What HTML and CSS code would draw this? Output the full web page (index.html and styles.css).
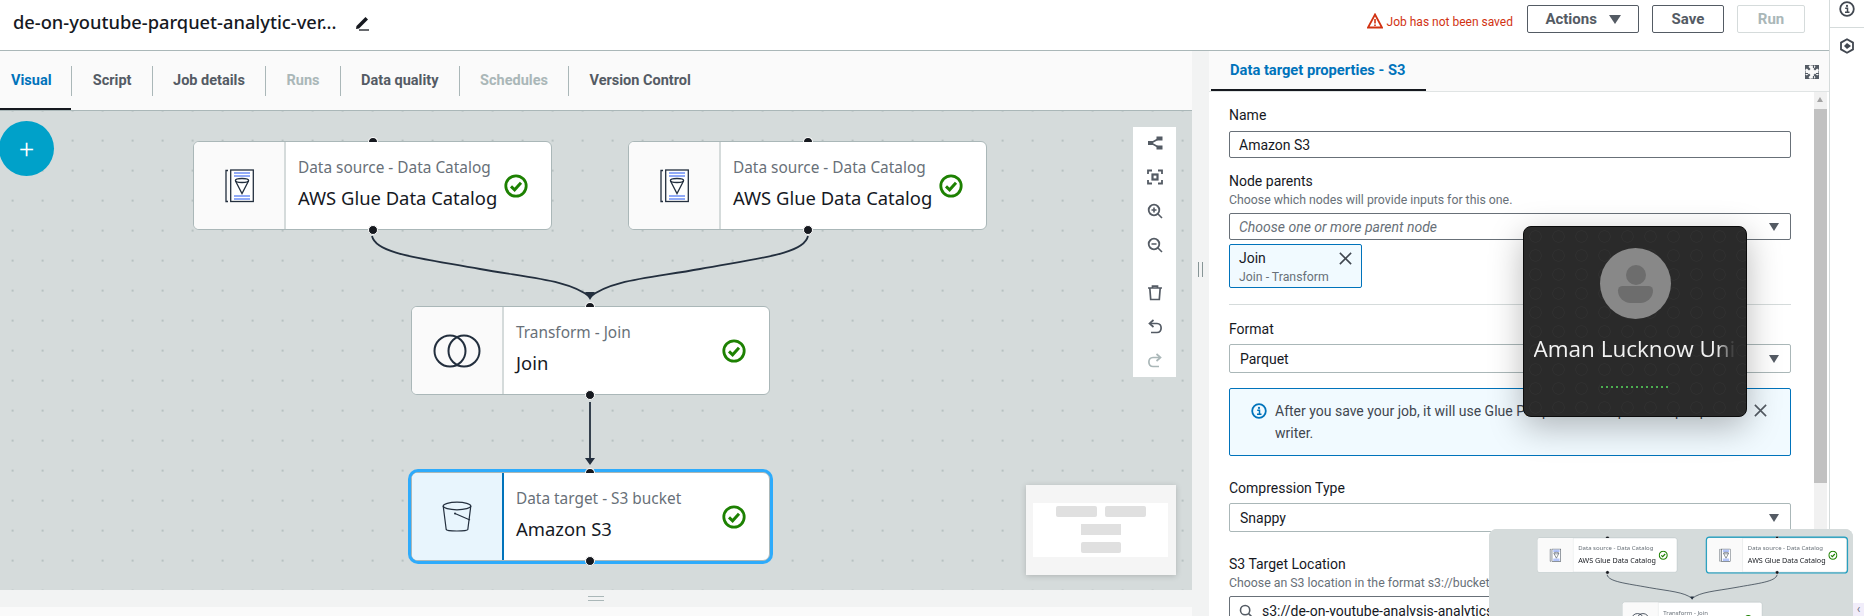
FILE: index.html
```html
<!DOCTYPE html>
<html lang="en">

<head>
  <meta charset="UTF-8">
  <meta name="viewport" content="width=device-width, initial-scale=1.0">
  <title>Glue Studio - Visual ETL</title>
  <link rel="stylesheet" href="styles.css">
</head>

<body>
  <!-- Shared icons -->
  <svg class="icon-defs" aria-hidden="true">
    <symbol id="i-check" viewBox="0 0 24 24">
      <circle cx="12" cy="12" r="10.2" fill="none" stroke="#1d8102" stroke-width="2.8" />
      <path d="M7 12.400l3.600 3.400L17 8.800" fill="none" stroke="#1d8102" stroke-width="3" />
    </symbol>
    <symbol id="i-catalog" viewBox="0 0 30 34">
      <path d="M4 1.500H2V32.500H4" fill="none" stroke="#232f3e" stroke-width="1.300" />
      <rect x="6.700" y="1" width="22.600" height="31.500" fill="#fff" stroke="#232f3e" stroke-width="1.300" />
      <path d="M10 4h16M10 7h16M10 27h16M10 30h16" stroke="#6d8ff5" stroke-width="1.700" />
      <ellipse cx="18" cy="11.500" rx="6.600" ry="2" fill="none" stroke="#232f3e" stroke-width="1.300" />
      <path d="M11.500 12l6.500 12.500L24.500 12" fill="none" stroke="#232f3e" stroke-width="1.300" />
    </symbol>
    <symbol id="i-join" viewBox="0 0 48 34">
      <circle cx="17" cy="17" r="15.500" fill="none" stroke="#232f3e" stroke-width="2" />
      <circle cx="31" cy="17" r="15.500" fill="none" stroke="#232f3e" stroke-width="2" />
    </symbol>
    <symbol id="i-bucket" viewBox="0 0 30 32">
      <ellipse cx="15" cy="5" rx="13.800" ry="3.800" fill="none" stroke="#232f3e" stroke-width="1.200" />
      <path d="M1.200 5l3 23.500c.5 2 20.800 2 21.600 0l3-23.500" fill="none" stroke="#232f3e" stroke-width="1.200" />
      <path d="M13 12.500l15 6.500" stroke="#232f3e" stroke-width="1.200" />
      <circle cx="13" cy="12.500" r="1" fill="#232f3e" />
    </symbol>
    <symbol id="i-x" viewBox="0 0 16 16">
      <path d="M2 2l12 12M14 2L2 14" fill="none" stroke="currentColor" stroke-width="1.700" />
    </symbol>
    <symbol id="i-info" viewBox="0 0 16 16">
      <circle cx="8" cy="8" r="6.800" fill="none" stroke="currentColor" stroke-width="1.800" />
      <circle cx="8" cy="4.900" r="1.100" fill="currentColor" />
      <path d="M6.200 7.200H8.500V11M6 11.300h4.500" fill="none" stroke="currentColor" stroke-width="1.500" />
    </symbol>
    <g id="graph-edges">
      <path d="M372 126C376 144 420 148 480 159C530 168 570 170 590 187" />
      <path d="M808 126C804 144 760 148 700 159C650 168 610 170 590 187" />
      <path d="M590 292V352" />
      <polygon class="edge-head" points="585,182 595,182 590,190" />
      <polygon class="edge-head" points="585,348 595,348 590,355" />
    </g>
  </svg>

  <div class="app">
    <div class="workspace">
      <header class="topbar">
        <h1 class="job-title">de-on-youtube-parquet-analytic-ver...</h1>
        <svg class="pencil" viewBox="0 0 16 16">
          <path d="M2.500 11L11.500 2L14 4.500L5 13.500L2 14Z" fill="#16191f" />
          <path d="M5 15h10" stroke="#16191f" stroke-width="1.300" />
        </svg>
        <div class="save-status">
          <svg class="warn-icon" viewBox="0 0 16 16">
            <path d="M8 1.500L15 14.500H1Z" fill="none" stroke="#d13212" stroke-width="1.800" />
            <path d="M8 6v4.500M8 11.500v1.500" stroke="#d13212" stroke-width="1.600" />
          </svg>
          <span>Job has not been saved</span>
        </div>
        <button class="btn btn-actions">Actions <span class="caret"></span></button>
        <button class="btn btn-save">Save</button>
        <button class="btn btn-run" disabled>Run</button>
      </header>

      <div class="panes">
        <section class="editor">
          <nav class="tabs">
            <span class="tab active">Visual</span>
            <span class="tab">Script</span>
            <span class="tab">Job details</span>
            <span class="tab disabled">Runs</span>
            <span class="tab">Data quality</span>
            <span class="tab disabled">Schedules</span>
            <span class="tab last">Version Control</span>
          </nav>

          <div class="canvas">
            <button class="add-node">+</button>

            <svg class="edges"><use href="#graph-edges" /></svg>

            <div class="node node-a">
              <span class="port port-in"></span>
              <div class="node-icon"><svg class="ic-catalog"><use href="#i-catalog" /></svg></div>
              <div class="node-body">
                <span class="node-type">Data source - Data Catalog</span>
                <span class="node-name">AWS Glue Data Catalog</span>
              </div>
              <svg class="node-check"><use href="#i-check" /></svg>
              <span class="port port-out"></span>
            </div>

            <div class="node node-b">
              <span class="port port-in"></span>
              <div class="node-icon"><svg class="ic-catalog"><use href="#i-catalog" /></svg></div>
              <div class="node-body">
                <span class="node-type">Data source - Data Catalog</span>
                <span class="node-name">AWS Glue Data Catalog</span>
              </div>
              <svg class="node-check"><use href="#i-check" /></svg>
              <span class="port port-out"></span>
            </div>

            <div class="node node-c">
              <span class="port port-in"></span>
              <div class="node-icon"><svg class="ic-join"><use href="#i-join" /></svg></div>
              <div class="node-body">
                <span class="node-type">Transform - Join</span>
                <span class="node-name">Join</span>
              </div>
              <svg class="node-check"><use href="#i-check" /></svg>
              <span class="port port-out"></span>
            </div>

            <div class="node node-d selected">
              <span class="port port-in"></span>
              <div class="node-icon"><svg class="ic-bucket"><use href="#i-bucket" /></svg></div>
              <div class="node-body">
                <span class="node-type">Data target - S3 bucket</span>
                <span class="node-name">Amazon S3</span>
              </div>
              <svg class="node-check"><use href="#i-check" /></svg>
              <span class="port port-out"></span>
            </div>

            <!-- Canvas tools -->
            <div class="toolbar">
              <svg class="tool" viewBox="0 0 16 16">
                <path d="M4 8L12 3.500M4 8L12 12.500" stroke="#545b64" stroke-width="1.500" />
                <rect x="1" y="6" width="5" height="4" fill="#545b64" />
                <rect x="9.500" y="1.500" width="6" height="4" fill="#545b64" />
                <rect x="9.500" y="10.500" width="6" height="4" fill="#545b64" />
              </svg>
              <svg class="tool" viewBox="0 0 16 16">
                <path d="M1 5V1.500H5M11 1.500H15V5M15 11V14.500H11M5 14.500H1V11" fill="none" stroke="#545b64" stroke-width="1.800" />
                <rect x="5.500" y="5.500" width="5" height="5" fill="none" stroke="#545b64" stroke-width="2.200" />
              </svg>
              <svg class="tool" viewBox="0 0 16 16">
                <circle cx="7" cy="7" r="5.300" fill="none" stroke="#545b64" stroke-width="1.800" />
                <path d="M11 11l4 4M4.500 7h5M7 4.500v5" stroke="#545b64" stroke-width="1.600" />
              </svg>
              <svg class="tool" viewBox="0 0 16 16">
                <circle cx="7" cy="7" r="5.300" fill="none" stroke="#545b64" stroke-width="1.800" />
                <path d="M11 11l4 4M4.500 7h5" stroke="#545b64" stroke-width="1.600" />
              </svg>
              <svg class="tool tool-gap" viewBox="0 0 16 16">
                <path d="M1 3h14M5.500 3V1.200h5V3M2.800 3l.9 11.500h8.600L13.200 3" fill="none" stroke="#545b64" stroke-width="1.700" />
              </svg>
              <svg class="tool" viewBox="0 0 16 16">
                <path d="M6.500 1L2.500 4.500L6.500 8" fill="none" stroke="#545b64" stroke-width="1.700" />
                <path d="M3 4.500H10C15.500 4.500 15.500 13.500 10 13.500H4" fill="none" stroke="#545b64" stroke-width="1.700" />
              </svg>
              <svg class="tool" viewBox="0 0 16 16">
                <path d="M9.500 1L13.500 4.500L9.500 8" fill="none" stroke="#aab7b8" stroke-width="1.700" />
                <path d="M13 4.500H6C.5 4.500 .5 13.500 6 13.500H12" fill="none" stroke="#aab7b8" stroke-width="1.700" />
              </svg>
            </div>

            <!-- Minimap -->
            <div class="minimap">
              <div class="minimap-view">
                <div class="mini-row"><span class="mini-box"></span><span class="mini-box"></span></div>
                <div class="mini-row"><span class="mini-box square"></span></div>
                <div class="mini-row"><span class="mini-box"></span></div>
              </div>
            </div>
          </div>

          <div class="h-resizer"><span class="h-grip"></span></div>
          <div class="bottom-strip"></div>
        </section>

        <div class="v-resizer"><span class="v-grip"></span></div>

        <aside class="props">
          <div class="props-tabs">
            <span class="props-tab">Data target properties - S3</span>
            <svg class="expand" viewBox="0 0 14 14">
              <path d="M0 0h5L3.500 1.800 5.500 4 4 5.500 1.800 3.500 0 5ZM14 0v5L12.200 3.500 10 5.500 8.500 4 10.500 1.800 9 0ZM0 14V9L1.800 10.500 4 8.500 5.500 10 3.500 12.200 5 14ZM14 14H9L10.500 12.200 8.500 10 10 8.500 12.200 10.500 14 9Z" fill="#545b64" />
              <path d="M5.500 0h3v3M0 5.500v3h3M14 5.500v3h-3M5.500 14h3v-3" fill="none" stroke="#545b64" stroke-width="1.200" />
            </svg>
          </div>
          <div class="props-body">
            <form class="props-form">
              <label class="field-label first">Name</label>
              <div class="input strong">Amazon S3</div>

              <label class="field-label parents">Node parents</label>
              <div class="field-hint">Choose which nodes will provide inputs for this one.</div>
              <div class="input strong select"><em>Choose one or more parent node</em><span class="caret"></span></div>
              <div class="token">
                <div>
                  <div class="token-name">Join</div>
                  <div class="token-sub">Join - Transform</div>
                </div>
                <svg class="token-x"><use href="#i-x" /></svg>
              </div>

              <hr class="divider">

              <label class="field-label format">Format</label>
              <div class="input select light"><span>Parquet</span><span class="caret"></span></div>

              <div class="alert">
                <svg class="alert-icon"><use href="#i-info" /></svg>
                <p>After you save your job, it will use Glue Parquet as the optimized parquet writer.</p>
                <svg class="alert-x"><use href="#i-x" /></svg>
              </div>

              <label class="field-label compression">Compression Type</label>
              <div class="input select light tall"><span>Snappy</span><span class="caret"></span></div>

              <label class="field-label location">S3 Target Location</label>
              <div class="field-hint">Choose an S3 location in the format s3://bucket/prefix/object/</div>
              <div class="input strong search">
                <svg class="search-icon" viewBox="0 0 16 16">
                  <circle cx="7" cy="7" r="5.300" fill="none" stroke="#545b64" stroke-width="1.800" />
                  <path d="M11 11l4 4" stroke="#545b64" stroke-width="1.800" />
                </svg>
                <span>s3://de-on-youtube-analysis-analytics/parquet/</span>
              </div>
            </form>
            <div class="scrollbar">
              <span class="scroll-up"></span>
              <span class="scroll-thumb"></span>
            </div>
          </div>
        </aside>
      </div>
    </div>

    <div class="rail">
      <div class="rail-item top"><svg class="rail-icon"><use href="#i-info" /></svg></div>
      <div class="rail-item">
        <svg class="rail-icon" viewBox="0 0 16 16">
          <path d="M8 1.200L14 4.600V11.400L8 14.800L2 11.400V4.600Z" fill="none" stroke="#414750" stroke-width="1.800" />
          <path d="M8 5L12 8L8 11L5 8Z" fill="#414750" />
        </svg>
      </div>
    </div>

    <!-- Notification windows on top of the page -->
    <div class="call-card">
      <div class="avatar">
        <span class="avatar-head"></span>
        <span class="avatar-body"></span>
      </div>
      <div class="call-name">Aman Lucknow University</div>
      <div class="call-dots"></div>
    </div>

    <div class="tab-preview">
      <div class="canvas preview-canvas">
        <svg class="edges"><use href="#graph-edges" /></svg>
        <div class="node node-a">
          <span class="port port-in"></span>
          <div class="node-icon"><svg class="ic-catalog"><use href="#i-catalog" /></svg></div>
          <div class="node-body">
            <span class="node-type">Data source - Data Catalog</span>
            <span class="node-name">AWS Glue Data Catalog</span>
          </div>
          <svg class="node-check"><use href="#i-check" /></svg>
          <span class="port port-out"></span>
        </div>
        <div class="node node-b selected">
          <span class="port port-in"></span>
          <div class="node-icon"><svg class="ic-catalog"><use href="#i-catalog" /></svg></div>
          <div class="node-body">
            <span class="node-type">Data source - Data Catalog</span>
            <span class="node-name">AWS Glue Data Catalog</span>
          </div>
          <svg class="node-check"><use href="#i-check" /></svg>
          <span class="port port-out"></span>
        </div>
        <div class="node node-c">
          <div class="node-icon"><svg class="ic-join"><use href="#i-join" /></svg></div>
          <div class="node-body">
            <span class="node-type">Transform - Join</span>
            <span class="node-name">Join</span>
          </div>
          <svg class="node-check"><use href="#i-check" /></svg>
        </div>
      </div>
    </div>
    <div class="side-peek">‹</div>
  </div>
</body>

</html>
```

FILE: styles.css
```css
* {
  box-sizing: border-box;
}

html,
body {
  margin: 0;
  padding: 0;
  height: 100%;
  overflow: hidden;
  background-color: #fff;
}

body {
  font-family: Roboto, "Liberation Sans", sans-serif;
  color: #16191f;
}

.icon-defs {
  position: absolute;
  width: 0;
  height: 0;
}

.app {
  position: relative;
  display: flex;
  width: 1864px;
  height: 616px;
  overflow: hidden;
}

.workspace {
  display: flex;
  flex-direction: column;
  width: 1829px;
}

/* Top bar */
.topbar {
  display: flex;
  align-items: flex-start;
  height: 51px;
  padding: 5px 24px 0 13px;
  border-bottom: 1px solid #aab7b8;
}

.job-title {
  margin: 6px 0 0;
  font-family: "Noto Sans", sans-serif;
  font-size: 18.3px;
  font-weight: 500;
  line-height: 22px;
}

.pencil {
  width: 16px;
  height: 16px;
  margin: 10px 0 0 17px;
}

.save-status {
  display: flex;
  align-items: center;
  gap: 4px;
  height: 32px;
  margin-left: auto;
  margin-right: 14px;
  font-size: 12px;
  color: #d13212;
}

.save-status span {
  padding-top: 2px;
}

.warn-icon {
  width: 16px;
  height: 16px;
}

.btn {
  height: 28px;
  padding: 0;
  margin-left: 13px;
  border: 1px solid #545b64;
  border-radius: 2px;
  background: #fff;
  color: #545b64;
  font-family: inherit;
  font-size: 15px;
  font-weight: 700;
}

.save-status + .btn {
  margin-left: 0;
}

.btn-actions {
  width: 112px;
}

.btn-actions .caret {
  margin-left: 8px;
  border-left-width: 6px;
  border-right-width: 6px;
  border-top-width: 9px;
}

.btn-save {
  width: 72px;
}

.btn-run {
  width: 68px;
  border-color: #d5dbdb;
  color: #aab7b8;
}

.caret {
  display: inline-block;
  width: 0;
  height: 0;
  border-left: 5px solid transparent;
  border-right: 5px solid transparent;
  border-top: 8px solid #545b64;
}

.panes {
  display: flex;
  flex: 1;
  min-height: 0;
}

/* Left side */
.editor {
  display: flex;
  flex-direction: column;
  width: 1192px;
}

.tabs {
  display: flex;
  align-items: center;
  flex: none;
  height: 60px;
  background: #fafafa;
  border-bottom: 1px solid #aab7b8;
}

.tab {
  position: relative;
  padding: 0 20.3px;
  height: 30px;
  line-height: 30px;
  border-right: 1px solid #aab7b8;
  font-size: 14.5px;
  font-weight: 700;
  color: #545b64;
}

.tab.active {
  padding: 0 20px 0 11px;
  color: #0073bb;
}

.tab.active::after {
  content: "";
  position: absolute;
  left: 0;
  right: 0;
  bottom: -14px;
  height: 2px;
  background: #16191f;
}

.tab.disabled {
  color: #aab7b8;
}

.tab.last {
  border-right: 0;
}

.canvas {
  position: relative;
  flex: none;
  height: 479px;
  background-color: #d5dbdb;
  background-image: radial-gradient(circle, #aeb9b9 0.6px, transparent 1px);
  background-size: 30px 30px;
  background-position: -2.4px -15.4px;
  overflow: hidden;
}

.add-node {
  position: absolute;
  left: -1px;
  top: 10px;
  width: 55px;
  height: 55px;
  padding: 0;
  border: 0;
  border-radius: 50%;
  background: #00a1c9;
  color: #fff;
  font-family: inherit;
  font-size: 26px;
  font-weight: 300;
  line-height: 52px;
}

.edges {
  position: absolute;
  left: 0;
  top: -1px;
  width: 1192px;
  height: 480px;
  fill: none;
  stroke: #232f3e;
  stroke-width: 1.8;
}

.edge-head {
  fill: #232f3e;
  stroke: none;
}

.node {
  position: absolute;
  display: flex;
  align-items: center;
  width: 359px;
  height: 89px;
  background: #fff;
  border: 1px solid #aab7b8;
  border-radius: 6px;
}

.node-a {
  left: 193px;
  top: 30px;
}

.node-b {
  left: 628px;
  top: 30px;
}

.node-c {
  left: 411px;
  top: 195px;
}

.node-d {
  left: 411px;
  top: 361px;
}

.node-c .port,
.node-d .port {
  left: 173px;
}

.node.selected {
  box-shadow: 0 0 0 3px #2eabfb;
  border-radius: 7px;
}

.node-icon {
  display: flex;
  align-items: center;
  justify-content: center;
  flex: none;
  width: 92px;
  height: 100%;
  background: #fafafa;
  border-right: 2px solid #d5dbdb;
  border-radius: 5px 0 0 5px;
}

.selected .node-icon {
  background: #e8f5fd;
  border-right-color: #0073bb;
}

.ic-catalog {
  width: 30px;
  height: 34px;
}

.ic-join {
  width: 48px;
  height: 34px;
}

.ic-bucket {
  width: 30px;
  height: 32px;
}

.node-body {
  display: flex;
  flex-direction: column;
  flex: 1;
  gap: 9px;
  padding-left: 12px;
  padding-bottom: 4px;
  white-space: nowrap;
  font-family: "Noto Sans", sans-serif;
}

.node-type {
  font-size: 15.4px;
  line-height: 20px;
  color: #687078;
}

.node-name {
  font-size: 18.4px;
  line-height: 22px;
  color: #16191f;
}

.node-check {
  flex: none;
  width: 24px;
  height: 24px;
  margin-right: 23px;
}

.port {
  position: absolute;
  left: 174px;
  width: 10px;
  background: #16191f;
  border: 1px solid #fff;
}

.port-in {
  top: -5px;
  height: 5px;
  border-bottom: 0;
  border-radius: 5px 5px 0 0;
}

.port-out {
  bottom: -6px;
  height: 10px;
  border-radius: 50%;
}

/* Canvas tools */
.toolbar {
  position: absolute;
  left: 1133px;
  top: 16px;
  display: flex;
  flex-direction: column;
  align-items: center;
  gap: 18px;
  width: 43px;
  height: 250px;
  padding-top: 8px;
  background: #fff;
}

.tool {
  flex: none;
  width: 16px;
  height: 16px;
}

.tool-gap {
  margin-top: 14px;
}

.minimap {
  position: absolute;
  left: 1026px;
  top: 374px;
  width: 150px;
  height: 90px;
  padding: 18px 8px 18px 7px;
  background: #f5f5f5;
  box-shadow: 0 1px 6px rgba(0, 0, 0, 0.18);
}

.minimap-view {
  display: flex;
  flex-direction: column;
  gap: 7px;
  height: 54px;
  padding-top: 3px;
  background: #fff;
}

.mini-row {
  display: flex;
  justify-content: center;
  gap: 8px;
}

.mini-box {
  width: 41px;
  height: 11px;
  border-radius: 2px;
  background: #e0e0e0;
}

.mini-row + .mini-row .mini-box {
  width: 40px;
}

.mini-box.square {
  border-radius: 0;
}

.h-resizer {
  display: flex;
  align-items: center;
  justify-content: center;
  flex: none;
  height: 17px;
  background: #f2f3f3;
}

.h-grip {
  width: 16px;
  height: 5px;
  border-top: 1px solid #aab7b8;
  border-bottom: 1px solid #aab7b8;
}

.bottom-strip {
  flex: 1;
  background: #fafafa;
}

.v-resizer {
  display: flex;
  align-items: center;
  justify-content: center;
  width: 17px;
  padding-bottom: 129px;
  background: #f2f3f3;
}

.v-grip {
  width: 5px;
  height: 15px;
  border-left: 1px solid #879596;
  border-right: 1px solid #879596;
}

/* Right side */
.props {
  display: flex;
  flex-direction: column;
  flex: 1;
  min-width: 0;
}

.props-tabs {
  position: relative;
  display: flex;
  align-items: center;
  height: 41px;
  padding-left: 2px;
  background: #fafafa;
  border-bottom: 1px solid #e0e4e4;
}

.props-tab {
  display: block;
  width: 215px;
  height: 40px;
  padding-left: 19px;
  line-height: 39px;
  border-bottom: 2px solid #16191f;
  font-size: 14.7px;
  font-weight: 700;
  color: #0073bb;
}

.expand {
  position: absolute;
  left: 596px;
  top: 14px;
  width: 14px;
  height: 14px;
}

.props-body {
  display: flex;
  flex: 1;
  min-height: 0;
}

.props-form {
  width: 582px;
  padding-left: 20px;
  margin: 0;
  overflow: hidden;
  font-size: 14px;
}

.field-label {
  display: block;
  margin-top: 16px;
  line-height: 18px;
  color: #16191f;
}

.field-label.first {
  margin-top: 14px;
}

.field-label.parents {
  margin-top: 14px;
}

.field-hint {
  margin-top: 1px;
  font-size: 12.3px;
  line-height: 18px;
  color: #687078;
}

.field-label + .input {
  margin-top: 7px;
}

.input {
  display: flex;
  align-items: center;
  justify-content: space-between;
  width: 100%;
  height: 27px;
  padding: 0 11px 0 9px;
  background: #fff;
  border: 1px solid #687078;
  border-radius: 2px;
}

.field-hint + .input {
  margin-top: 4px;
}

.input.light {
  height: 29px;
  padding-left: 10px;
  border-color: #aab7b8;
}

.input.tall {
  height: 29px;
}

.input em {
  color: #687078;
}

.token {
  display: flex;
  justify-content: space-between;
  width: 133px;
  height: 44px;
  margin-top: 4px;
  padding: 4px 8px 0 9px;
  background: #f1faff;
  border: 1px solid #0073bb;
  border-radius: 2px;
}

.token-name {
  line-height: 19px;
}

.token-sub {
  font-size: 12.3px;
  line-height: 18px;
  color: #687078;
}

.token-x {
  width: 15px;
  height: 15px;
  margin-top: 2px;
  color: #414750;
}

.divider {
  height: 1px;
  margin: 16px 0 0;
  border: 0;
  background: #d5dbdb;
}

.field-label.format {
  margin-top: 15px;
}

.field-label.format + .input {
  margin-top: 6px;
}

.alert {
  display: flex;
  align-items: flex-start;
  height: 68px;
  margin-top: 15px;
  padding: 11px 22px 0 21px;
  background: #f1faff;
  border: 1px solid #0073bb;
  border-radius: 2px;
}

.alert p {
  flex: 1;
  margin: 0 16px 0 8px;
  line-height: 22px;
  color: #414750;
}

.alert-icon {
  flex: none;
  width: 16px;
  height: 16px;
  margin-top: 3px;
  color: #0073bb;
}

.alert-x {
  flex: none;
  width: 15px;
  height: 15px;
  margin-top: 3px;
  color: #545b64;
}

.field-label.compression {
  margin-top: 23px;
}

.field-label.compression + .input {
  margin-top: 6px;
}

.field-label.location {
  margin-top: 23px;
}

.search {
  justify-content: flex-start;
  height: 30px;
}

.search-icon {
  width: 14px;
  height: 14px;
  margin: 0 9px 0 0;
  flex: none;
}

.scrollbar {
  position: relative;
  width: 13px;
  margin-left: 23px;
  background: #f1f1f1;
}

.scroll-up {
  position: absolute;
  left: 3px;
  top: 5px;
  border-left: 3.5px solid transparent;
  border-right: 3.5px solid transparent;
  border-bottom: 5px solid #a3a3a3;
}

.scroll-thumb {
  position: absolute;
  left: 0;
  top: 17px;
  width: 13px;
  height: 374px;
  background: #c1c1c1;
}

/* Right rail */
.rail {
  flex: 1;
  border-left: 1px solid #d5dbdb;
}

.rail-item {
  display: flex;
  justify-content: center;
  height: 37px;
  padding-top: 1px;
  color: #414750;
}

.rail-item.top {
  height: 28px;
  padding-top: 1px;
  border-bottom: 1px solid #d5dbdb;
}

.rail-item + .rail-item {
  padding-top: 10px;
}

.rail-icon {
  width: 16px;
  height: 16px;
}

/* Call window */
.call-card {
  position: absolute;
  left: 1523px;
  top: 226px;
  display: flex;
  flex-direction: column;
  align-items: center;
  width: 224px;
  height: 191px;
  padding-top: 21px;
  background-color: #2a2a2a;
  background-image: radial-gradient(circle, transparent 5px, #2f2f2f 5.5px, #2f2f2f 6px, transparent 6.5px);
  background-size: 23px 19px;
  border: 1px solid #0c0c0c;
  border-radius: 8px;
  box-shadow: 0 10px 34px rgba(0, 0, 0, 0.28);
}

.avatar {
  position: relative;
  width: 71px;
  height: 71px;
  border-radius: 50%;
  background: #888;
}

.avatar-head {
  position: absolute;
  left: 26px;
  top: 17px;
  width: 20px;
  height: 20px;
  border-radius: 50%;
  background: #6d6d6d;
}

.avatar-body {
  position: absolute;
  left: 18px;
  top: 38px;
  width: 35px;
  height: 17px;
  border-radius: 6px 6px 17px 17px;
  background: #6d6d6d;
}

.call-name {
  width: 203px;
  margin-top: 14px;
  overflow: hidden;
  white-space: nowrap;
  font-family: "Open Sans", sans-serif;
  font-size: 22.5px;
  line-height: 32px;
  color: #f2f2f2;
  -webkit-mask-image: linear-gradient(to right, #000 90%, transparent 99%);
  mask-image: linear-gradient(to right, #000 90%, transparent 99%);
}

.call-dots {
  width: 68px;
  height: 2px;
  margin-top: 21px;
  background-image: repeating-linear-gradient(to right, #4caf50 0 2px, transparent 2px 5px);
}

/* Alt-tab style preview */
.tab-preview {
  position: absolute;
  left: 1489px;
  top: 529px;
  width: 364px;
  height: 87px;
  overflow: hidden;
  background: #d5dbdb;
  border-radius: 8px 8px 0 0;
}

.preview-canvas {
  position: absolute;
  left: -27px;
  top: -3px;
  width: 1192px;
  transform: scale(0.39);
  transform-origin: 0 0;
}

.preview-canvas .node.selected {
  box-shadow: 0 0 0 3px #1b9fc2;
}

.preview-canvas .selected .node-icon {
  background: #fafafa;
  border-right-color: #d5dbdb;
}

.side-peek {
  position: absolute;
  left: 1853px;
  top: 603px;
  width: 11px;
  height: 13px;
  background: #f1edfa;
  font-size: 12px;
  line-height: 13px;
  text-align: center;
  color: #6f6f7f;
}
```
